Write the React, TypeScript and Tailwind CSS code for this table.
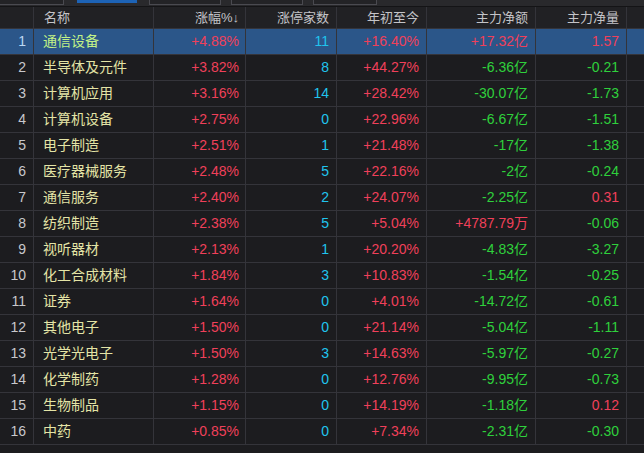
import React from 'react';

const rows = [
  ['通信设备', '+4.88%', '11', '+16.40%', '+17.32亿', '1.57'],
  ['半导体及元件', '+3.82%', '8', '+44.27%', '-6.36亿', '-0.21'],
  ['计算机应用', '+3.16%', '14', '+28.42%', '-30.07亿', '-1.73'],
  ['计算机设备', '+2.75%', '0', '+22.96%', '-6.67亿', '-1.51'],
  ['电子制造', '+2.51%', '1', '+21.48%', '-17亿', '-1.38'],
  ['医疗器械服务', '+2.48%', '5', '+22.16%', '-2亿', '-0.24'],
  ['通信服务', '+2.40%', '2', '+24.07%', '-2.25亿', '0.31'],
  ['纺织制造', '+2.38%', '5', '+5.04%', '+4787.79万', '-0.06'],
  ['视听器材', '+2.13%', '1', '+20.20%', '-4.83亿', '-3.27'],
  ['化工合成材料', '+1.84%', '3', '+10.83%', '-1.54亿', '-0.25'],
  ['证券', '+1.64%', '0', '+4.01%', '-14.72亿', '-0.61'],
  ['其他电子', '+1.50%', '0', '+21.14%', '-5.04亿', '-1.11'],
  ['光学光电子', '+1.50%', '3', '+14.63%', '-5.97亿', '-0.27'],
  ['化学制药', '+1.28%', '0', '+12.76%', '-9.95亿', '-0.73'],
  ['生物制品', '+1.15%', '0', '+14.19%', '-1.18亿', '0.12'],
  ['中药', '+0.85%', '0', '+7.34%', '-2.31亿', '-0.30'],
];

const tone = (v: string) => (v.startsWith('-') ? 'text-[#2fd03c]' : 'text-[#f0405a]');

const cols = 'grid grid-cols-[34px_120px_92px_91px_90px_109px_91px_1fr]';
const cell = 'flex items-center border-r border-[#34343a] h-full whitespace-nowrap';

const App = () => {
  const tabs = ['w-[65px]', 'w-[64px]', 'w-[72px]', 'w-[72px]', 'w-[64px]'];

  return (
    <div className="w-[644px] h-[453px] bg-[#1c1c1f] overflow-hidden font-['Liberation_Sans','Noto_Sans_CJK_SC',sans-serif]">
      {/* tab strip */}
      <div className="h-[7px] bg-[#29292c] flex items-start gap-[10px] border-b border-[#141416]">
        {tabs.map((w, i) => (
          <div
            key={i}
            className={`${w} h-[5px] ${
              i === 1
                ? 'bg-[#1d63b6] border-x-2 border-b-2 border-[#2a2a2e] ml-[1px]'
                : 'border-x border-b border-[#4a4a50] bg-[#232326]'
            } ${i === 0 ? 'ml-[-1px]' : ''}`}
          />
        ))}
      </div>

      {/* header */}
      <div className={`${cols} h-[22px] bg-[#212124] border-b border-[#34343a] text-[13px] text-[#c4c4c8]`}>
        <div className={cell} />
        <div className={`${cell} pl-[10px]`}>名称</div>
        <div className={`${cell} justify-end pr-[6px]`}>涨幅%↓</div>
        <div className={`${cell} justify-end pr-[7px]`}>涨停家数</div>
        <div className={`${cell} justify-end pr-[7px]`}>年初至今</div>
        <div className={`${cell} justify-end pr-[7px]`}>主力净额</div>
        <div className={`${cell} justify-end pr-[7px]`}>主力净量</div>
        <div className="h-full" />
      </div>

      {/* rows */}
      {rows.map((r, i) => {
        const sel = i === 0;
        return (
          <div
            key={i}
            className={`${cols} h-[26px] border-b border-[#34343a] text-[14px] ${sel ? 'bg-[#2b5689]' : ''}`}
          >
            <div className={`${cell} justify-end pr-[7px] ${sel ? 'text-[#bcd8f4]' : 'text-[#c8c8cc]'}`}>{i + 1}</div>
            <div className={`${cell} pl-[9px] ${sel ? 'text-[#c2f286]' : 'text-[#e4e4a6]'}`}>{r[0]}</div>
            <div className={`${cell} justify-end pr-[6px] ${tone(r[1])}`}>{r[1]}</div>
            <div className={`${cell} justify-end pr-[7px] text-[#20c4ee]`}>{r[2]}</div>
            <div className={`${cell} justify-end pr-[7px] ${tone(r[3])}`}>{r[3]}</div>
            <div className={`${cell} justify-end pr-[7px] ${tone(r[4])}`}>{r[4]}</div>
            <div className={`${cell} justify-end pr-[7px] ${tone(r[5])}`}>{r[5]}</div>
            <div className="h-full" />
          </div>
        );
      })}
    </div>
  );
};

export default App;
